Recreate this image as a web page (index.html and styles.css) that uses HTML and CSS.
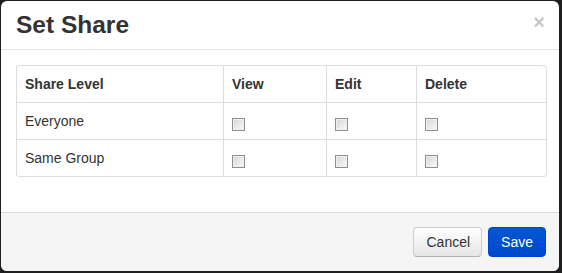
FILE: index.html
```html
<!DOCTYPE html>
<html>
<head>
<meta charset="utf-8">
<link rel="stylesheet" href="styles.css">
</head>
<body>
<div class="modal">
  <div class="modal-header">
    <h3 class="title">Set Share</h3>
    <span class="close">×</span>
  </div>
  <div class="modal-body">
    <table class="grid">
      <colgroup>
        <col class="c1"><col class="c2"><col class="c3"><col class="c4">
      </colgroup>
      <thead>
        <tr><th>Share Level</th><th>View</th><th>Edit</th><th>Delete</th></tr>
      </thead>
      <tbody>
        <tr><td>Everyone</td><td><input type="checkbox" class="cb"></td><td><input type="checkbox" class="cb"></td><td><input type="checkbox" class="cb"></td></tr>
        <tr><td>Same Group</td><td><input type="checkbox" class="cb"></td><td><input type="checkbox" class="cb"></td><td><input type="checkbox" class="cb"></td></tr>
      </tbody>
    </table>
  </div>
  <div class="modal-footer">
    <button class="btn btn-cancel">Cancel</button>
    <button class="btn btn-primary">Save</button>
  </div>
</div>
</body>
</html>
```
FILE: styles.css
```css
html, body {
  margin: 0;
  padding: 0;
  background: #1f1f1f;
  width: 562px;
  height: 273px;
  overflow: hidden;
}
body {
  padding: 1px 0 0 1px;
  box-sizing: border-box;
  font-family: "Liberation Sans", Arial, sans-serif;
  font-size: 14px;
  line-height: 20px;
  color: #333;
}
.modal {
  width: 558px;
  height: 270px;
  background: #fff;
  border-radius: 6px;
  overflow: hidden;
  display: flex;
  flex-direction: column;
}
.modal-header {
  display: flex;
  justify-content: space-between;
  align-items: flex-start;
  padding: 9px 14px 9px 15px;
  border-bottom: 1px solid #e5e5e5;
}
.title {
  margin: 0;
  font-size: 24.5px;
  line-height: 30px;
  font-weight: bold;
  color: #333;
}
.close {
  font-size: 20px;
  font-weight: bold;
  line-height: 20px;
  color: #c8c8c8;
  margin-top: 2px;
}
.modal-body {
  padding: 15px 12px 35px 15px;
}
.grid {
  width: 530px;
  border-collapse: separate;
  border-spacing: 0;
  border: 1px solid #ddd;
  border-left: 0;
  border-radius: 4px;
  table-layout: fixed;
}
.c1 { width: 207px; }
.c2 { width: 103px; }
.c3 { width: 90px; }
.c4 { width: 130px; }
.grid th, .grid td {
  padding: 8px;
  text-align: left;
  vertical-align: top;
  border-left: 1px solid #ddd;
  border-top: 1px solid #ddd;
  line-height: 20px;
  height: 20px;
}
.grid thead th { border-top: 0; font-weight: bold; }
.cb {
  appearance: none;
  -webkit-appearance: none;
  display: block;
  width: 13px;
  height: 13px;
  margin: 7px 0 0 0;
  box-sizing: border-box;
  border: 1px solid #8f8f8f;
  box-shadow: inset 0 0 0 1px #f0f0f0;
  background: linear-gradient(135deg, #d4d4d4 0%, #ececec 60%, #fafafa 100%);
}
.modal-footer {
  flex: 1;
  background: #f5f5f5;
  border-top: 1px solid #ddd;
  display: flex;
  justify-content: flex-end;
  align-items: flex-start;
  gap: 6px;
  padding: 14px 13px 0 0;
}
.btn {
  font-family: "Liberation Sans", Arial, sans-serif;
  font-size: 14px;
  line-height: 20px;
  padding: 4px 12px;
  border-radius: 4px;
  color: #333;
  border: 1px solid #ccc;
  border-bottom-color: #b3b3b3;
  background: linear-gradient(#ffffff, #e6e6e6);
  margin: 0;
}
.btn-cancel {
  padding: 4px 11px 4px 12px;
}
.btn-primary {
  color: #fff;
  border-color: #0044cc;
  background: linear-gradient(#0057d4, #0049cc);
}
```
